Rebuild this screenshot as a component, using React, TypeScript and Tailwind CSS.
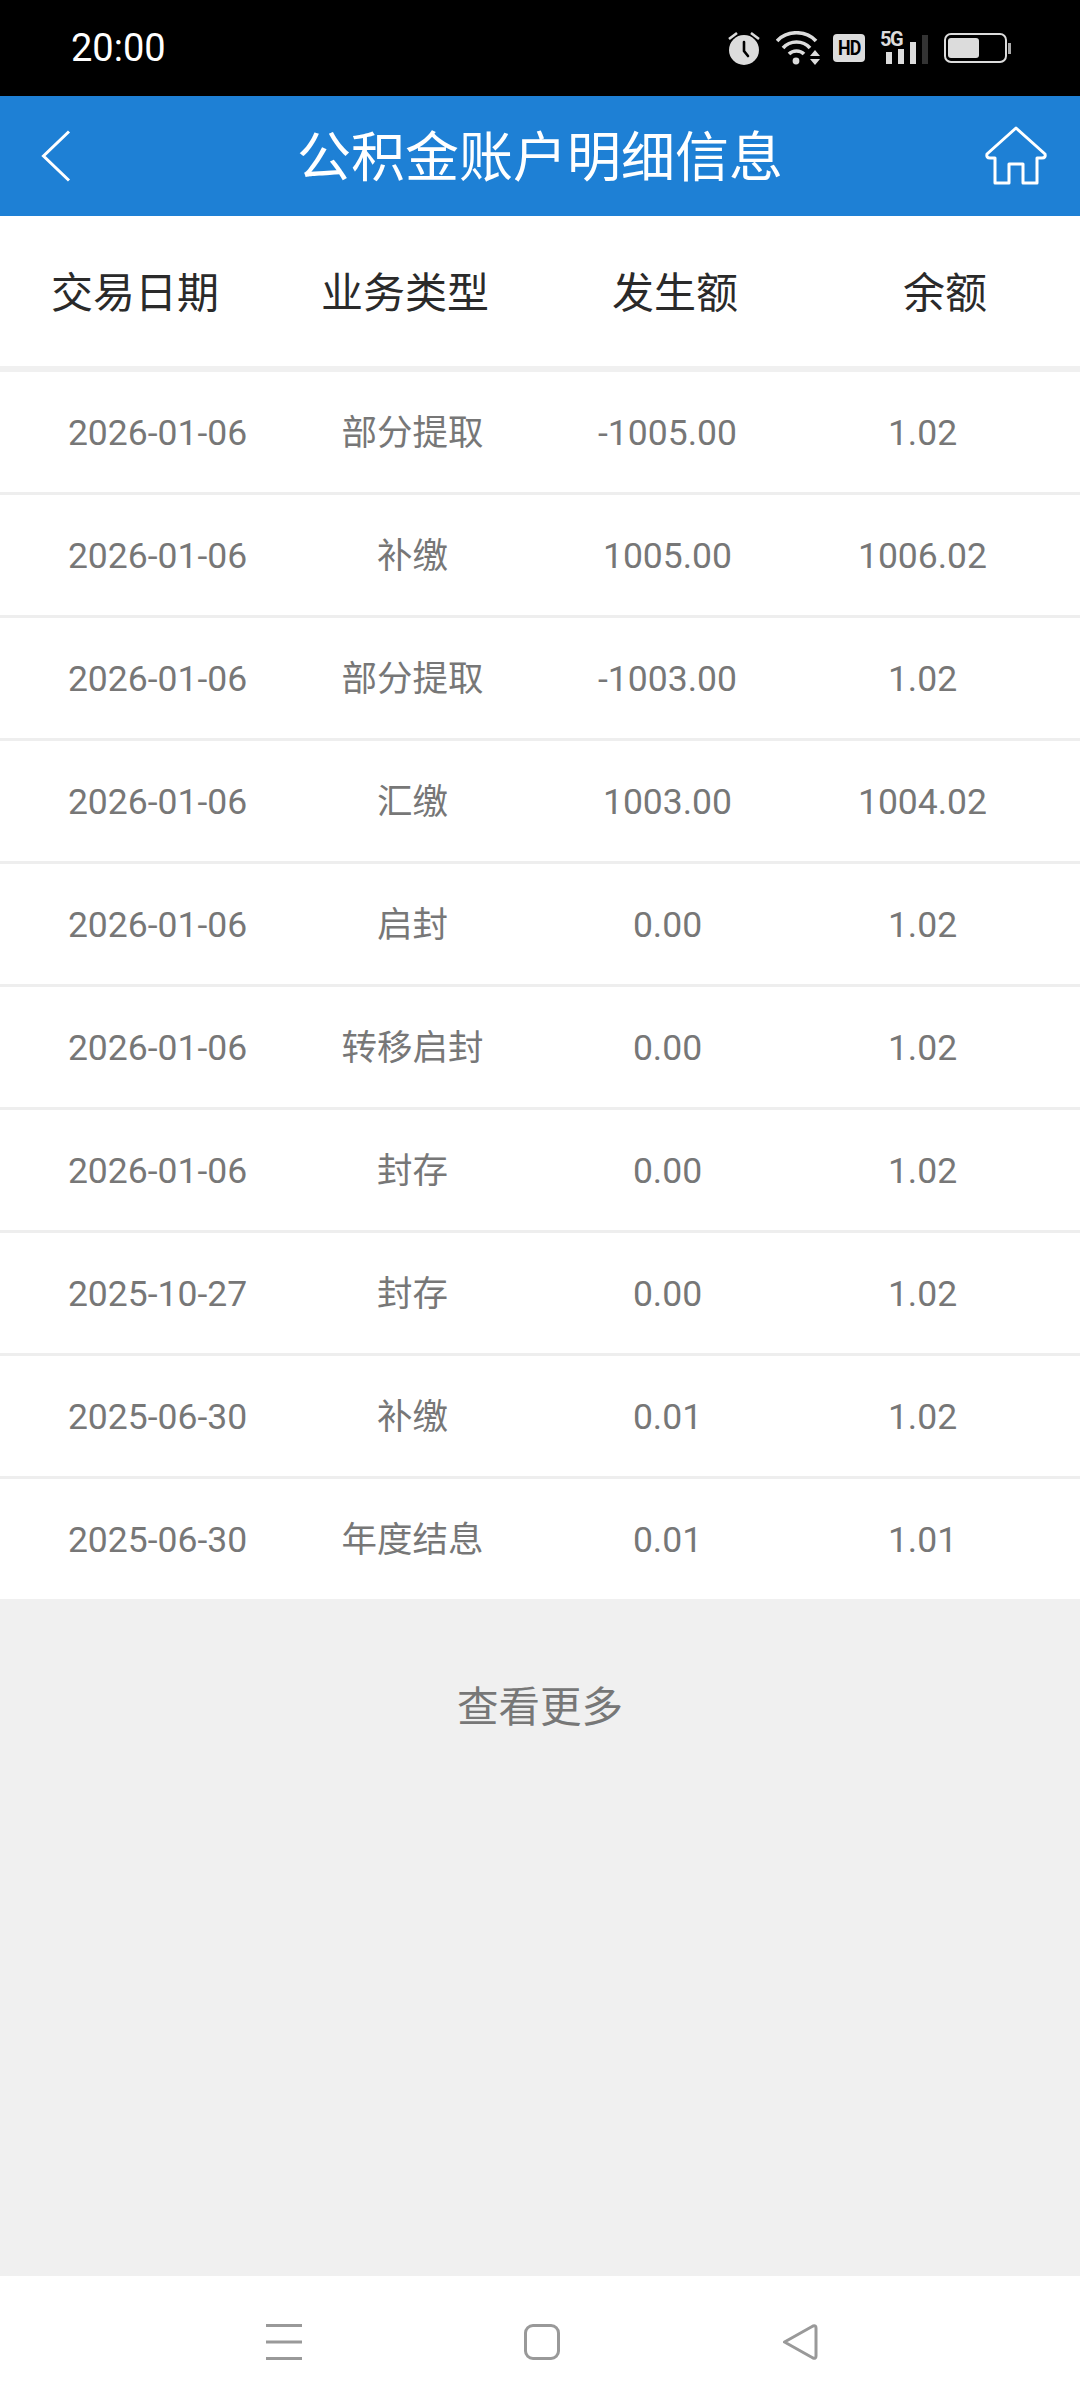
const FONT = "font-['Roboto','Noto_Sans_CJK_SC',sans-serif]";

const rows = [
  ["2026-01-06", "部分提取", "-1005.00", "1.02"],
  ["2026-01-06", "补缴", "1005.00", "1006.02"],
  ["2026-01-06", "部分提取", "-1003.00", "1.02"],
  ["2026-01-06", "汇缴", "1003.00", "1004.02"],
  ["2026-01-06", "启封", "0.00", "1.02"],
  ["2026-01-06", "转移启封", "0.00", "1.02"],
  ["2026-01-06", "封存", "0.00", "1.02"],
  ["2025-10-27", "封存", "0.00", "1.02"],
  ["2025-06-30", "补缴", "0.01", "1.02"],
  ["2025-06-30", "年度结息", "0.01", "1.01"],
];

const headers = ["交易日期", "业务类型", "发生额", "余额"];

function StatusIcons() {
  return (
    <div className="flex items-center">
      <svg width="32" height="34" viewBox="0 0 32 34" className="mr-[16px] text-[#dcdcdc]">
        <circle cx="16" cy="19" r="15" fill="currentColor" />
        <path d="M16 11v9l4 5" fill="none" stroke="#000" strokeWidth="2.6" strokeLinecap="round" />
        <path d="M1 8l8-6M31 8l-8-6" stroke="currentColor" strokeWidth="2.6" />
      </svg>
      <svg width="44" height="34" viewBox="0 0 44 34" className="mr-[13px] text-[#dcdcdc]">
        <path d="M1 10C11 -1 30 -1 40 10" fill="none" stroke="currentColor" strokeWidth="3.6" />
        <path d="M7 17C14 9 27 9 34 17" fill="none" stroke="currentColor" strokeWidth="3.6" />
        <path d="M13 23C17 19 24 19 28 23" fill="none" stroke="currentColor" strokeWidth="3.6" />
        <circle cx="20" cy="30" r="3.4" fill="currentColor" />
        <path d="M39 19l5 6H34zM34 28h10l-5 6z" fill="currentColor" />
      </svg>
      <div className="mr-[15px] flex h-[28px] w-[32px] items-center justify-center rounded-[4px] bg-[#dcdcdc] text-black">
        <span className="scale-x-[0.85] text-[21px] leading-none font-bold tracking-[-1px]">HD</span>
      </div>
      <div className="relative mr-[16px] h-[32px] w-[48px]">
        <span className="absolute top-0 left-0 text-[20px] leading-[14px] font-bold tracking-[-1.5px] text-[#dcdcdc]">
          5G
        </span>
        <div className="absolute right-0 bottom-0 left-[6px] flex items-end gap-[6px]">
          <div className="h-[12px] w-[6px] bg-[#dcdcdc]" />
          <div className="h-[15px] w-[6px] bg-[#dcdcdc]" />
          <div className="h-[22px] w-[6px] bg-[#dcdcdc]" />
          <div className="h-[29px] w-[6px] bg-[#333]" />
        </div>
      </div>
      <div className="flex items-center">
        <div className="h-[30px] w-[63px] rounded-[7px] border-2 border-[#dcdcdc] px-[2px] py-[3px]">
          <div className="h-full w-[31px] rounded-[3px] bg-[#dcdcdc]" />
        </div>
        <div className="ml-[1px] h-[11px] w-[3px] bg-[#aaa]" />
      </div>
    </div>
  );
}

export default function App() {
  return (
    <div className={`flex h-[2408px] w-[1080px] flex-col bg-[#f0f0f0] ${FONT}`}>
      <div className="flex h-[96px] items-center justify-between bg-black pr-[69px] pl-[71px]">
        <span className="text-[38px] text-white">20:00</span>
        <StatusIcons />
      </div>

      <div className="grid h-[120px] grid-cols-[1fr_auto_1fr] items-center bg-[#1e80d5]">
        <svg width="30" height="52" viewBox="0 0 30 52" fill="none" stroke="#fff" strokeWidth="3" className="ml-[41px]">
          <path d="M28 1.5L2.5 26L28 50.5" />
        </svg>
        <span className="pt-[6px] text-[54px] leading-none text-white">公积金账户明细信息</span>
        <svg width="62" height="60" viewBox="0 0 62 60" fill="none" stroke="#fff" strokeWidth="3" strokeLinejoin="round" className="mr-[33px] justify-self-end">
          <path d="M31 2L60 28Q61 32 57 32H52V57H38V38H24V57H10V32H5Q1 32 2 28Z" />
        </svg>
      </div>

      <div className="grid h-[150px] grid-cols-4 items-center bg-white pt-[4px] text-center text-[42px] text-[#2a2a2a]">
        {headers.map((h) => (
          <span key={h}>{h}</span>
        ))}
      </div>

      <div className="mt-[6px] bg-white">
        {rows.map((r, i) => (
          <div
            key={i}
            className="grid h-[123px] grid-cols-4 items-center border-b-[3px] border-[#eeeeee] px-[30px] pt-[4px] text-center text-[35.5px] text-[#777] last:h-[120px] last:border-b-0"
          >
            {r.map((c, j) => (
              <span key={j}>{c}</span>
            ))}
          </div>
        ))}
      </div>

      <div className="flex-1 pt-[81px] text-center text-[41.5px] leading-[56px] text-[#777]">查看更多</div>

      <div className="flex h-[132px] items-start bg-white pt-[48px]">
        <svg width="36" height="36" viewBox="0 0 36 36" className="ml-[266px] text-[#999]">
          <path d="M0 1.5H36M0 18H36M0 34.5H36" stroke="currentColor" strokeWidth="3" />
        </svg>
        <div className="ml-[222px] h-[36px] w-[36px] rounded-[9px] border-[3px] border-[#999]" />
        <svg width="36" height="36" viewBox="0 0 36 36" fill="none" className="ml-[222px] text-[#999]">
          <path d="M2.5 18L31 2Q34 1 34 4V32Q34 35 31 34Z" stroke="currentColor" strokeWidth="3" strokeLinejoin="round" />
        </svg>
      </div>
    </div>
  );
}
